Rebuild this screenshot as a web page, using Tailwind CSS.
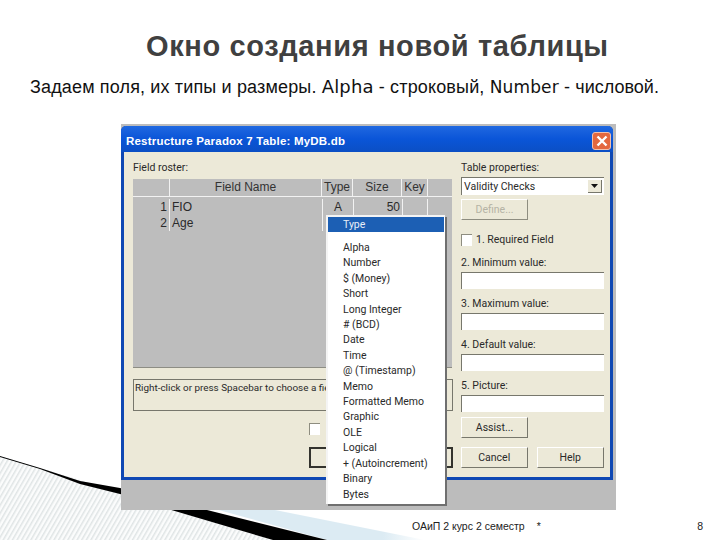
<!DOCTYPE html>
<html lang="en">
<head>
    <meta charset="UTF-8">
    <title>Окно создания новой таблицы</title>
    <script src="https://cdn.jsdelivr.net/npm/@tailwindcss/browser@4"></script>
</head>
<body class="bg-white">
<div class="relative w-[720px] h-[540px] overflow-hidden bg-white font-['Liberation_Sans',sans-serif]">

    <!-- slide decoration, bottom left -->
    <svg class="absolute left-0 top-0" width="720" height="540" viewBox="0 0 720 540">
        <defs>
            <pattern id="hatch" width="4" height="4" patternUnits="userSpaceOnUse" patternTransform="rotate(30)">
                <rect width="4" height="4" fill="#fbfcfc"/>
                <rect width="1.5" height="4" fill="#dfe4e5"/>
            </pattern>
            <linearGradient id="glow" x1="0" y1="0" x2="1" y2="0">
                <stop offset="0" stop-color="#dcebf3"/>
                <stop offset="0.8" stop-color="#dcebf3"/>
                <stop offset="1" stop-color="#ffffff"/>
            </linearGradient>
        </defs>
        <path d="M215 509 L270 509 L425 540 L327 540Z" fill="url(#glow)"/>
        <path d="M0 456 L120 492 L168 509 L273 540 L0 540Z" fill="url(#hatch)"/>
        <path d="M0 456 L40 468 L80 481 L120 488 L203 509 L327 540 L273 540 L168 509 L120 494 L80 484 L40 469 L0 457Z" fill="#000"/>
    </svg>

    <h1 class="relative pt-[30px] pl-[146px] text-[29px] leading-[32px] font-bold tracking-[0.63px] text-[#404040]">Окно создания новой таблицы</h1>
    <p class="relative mt-[14px] pl-[30px] text-[18px] leading-[22px] tracking-[0.15px] text-[#111] whitespace-nowrap">Задаем поля, их типы и размеры. <span class="font-['DejaVu_Sans',sans-serif]">Alpha</span> - строковый, <span class="font-['DejaVu_Sans',sans-serif] text-[17px]">Number</span> - <span class="tracking-normal">числовой.</span></p>

    <!-- screenshot of the Paradox dialog -->
    <div class="relative mt-[26px] ml-[121px] w-[495px] h-[386px] pt-[2px] bg-[#bcbcbc] font-['Roboto',sans-serif] text-[10.5px] leading-[12px] text-[#2a2a2a]">
        <div class="w-[492px] border-x-[3px] border-b-[3px] border-[#0f48b4] rounded-t-[5px] h-[354px] flex flex-col">
            <div class="h-[26px] -mx-[3px] shrink-0 rounded-t-[5px] bg-gradient-to-b from-[#1f68e0] via-[#0a55d8] to-[#0b4fc4] flex items-center justify-between pl-[5px] pr-[2px] pt-[3px]">
                <span class="font-['Liberation_Sans',sans-serif] text-[11.5px] font-bold tracking-[0.2px] text-white">Restructure Paradox 7 Table: MyDB.db</span>
                <span class="w-[19px] h-[18px] rounded-[3px] bg-[#e4683f] border border-[#f3c0ab] flex items-center justify-center">
                    <svg width="12" height="12" viewBox="0 0 12 12"><path d="M1.5 1.5 L10.5 10.5 M10.5 1.5 L1.5 10.5" stroke="#fff" stroke-width="2.4"/></svg>
                </span>
            </div>

            <div class="flex-1 bg-[#ece9d8] flex">
                <!-- left column -->
                <div class="w-[334px] shrink-0 pl-[9px] flex flex-col">
                    <div class="pt-[10px] h-[27px]">Field roster:</div>
                    <div class="w-[319px] h-[189px] bg-[#bdbdbd] border-b border-[#8d8d84] font-['Liberation_Sans',sans-serif] text-[12px]">
                        <div class="flex h-[18px] border-b border-[#f2f2f2] leading-[16px] text-center text-[#333]">
                            <span class="w-[37px] h-full border-r border-[#f2f2f2]"></span>
                            <span class="w-[152px] h-full border-r border-[#f2f2f2]">Field Name</span>
                            <span class="w-[31px] h-full border-r border-[#f2f2f2]">Type</span>
                            <span class="w-[49px] h-full border-r border-[#f2f2f2]">Size</span>
                            <span class="w-[26px] h-full border-r border-[#f2f2f2]">Key</span>
                        </div>
                        <div class="flex leading-[16px] h-[34px] pt-[2px]">
                            <div class="w-[37px] pr-[2px] text-right border-r border-[#f2f2f2]">1<br>2</div>
                            <div class="w-[152px] pl-[2px]">FIO<br>Age</div>
                            <div class="w-[31px] text-center border-l border-[#f2f2f2]">A</div>
                            <div class="w-[49px] pr-[2px] text-right border-l border-[#f2f2f2]">50</div>
                            <div class="w-[26px] border-x border-[#f2f2f2]"></div>
                        </div>
                    </div>
                    <div class="mt-[11px] w-[320px] h-[32px] border border-[#77776c] pl-[1px] pt-[2px] text-[9.9px] whitespace-nowrap overflow-hidden">Right-click or press Spacebar to choose a fie</div>
                    <div class="mt-[12px] ml-[176px] w-[11px] h-[12px] bg-white border-l border-t border-[#8e8d80]"></div>
                    <div class="mt-[12px] ml-[176px] w-[144px] h-[21px] border-2 border-[#33332e] bg-[#ece9d8]"></div>
                </div>

                <!-- right column -->
                <div class="w-[146px] pl-[3px] flex flex-col">
                    <div class="pt-[10px] h-[25px]">Table properties:</div>
                    <div class="w-[143px] h-[18px] bg-white border-l border-t border-[#77776c] flex items-center justify-between pl-[2px] pr-[2px]">
                        <span>Validity Checks</span>
                        <span class="w-[14px] h-[13px] bg-[#ece9d8] border-r border-b border-[#77776c] flex items-center justify-center">
                            <svg width="7" height="4" viewBox="0 0 7 4"><path d="M0 0H7L3.5 4Z" fill="#111"/></svg>
                        </span>
                    </div>
                    <button class="mt-[4px] w-[67px] h-[21px] border-t border-l border-white border-r border-b border-r-[#8e8d80] border-b-[#8e8d80] text-[#b5b3a5]">Define...</button>
                    <div class="mt-[14px] flex items-center gap-[4px] h-[12px]">
                        <span class="w-[11px] h-[12px] bg-white border-l border-t border-[#8e8d80]"></span>
                        <span>1. Required Field</span>
                    </div>
                    <div class="mt-[10px] h-[16px] pt-[1px]">2. Minimum value:</div>
                    <div class="w-[143px] h-[17px] bg-white border-l border-t border-[#77776c]"></div>
                    <div class="mt-[8px] h-[16px] pt-[1px]">3. Maximum value:</div>
                    <div class="w-[143px] h-[17px] bg-white border-l border-t border-[#77776c]"></div>
                    <div class="mt-[8px] h-[16px] pt-[1px]">4. Default value:</div>
                    <div class="w-[143px] h-[17px] bg-white border-l border-t border-[#77776c]"></div>
                    <div class="mt-[8px] h-[16px] pt-[1px]">5. Picture:</div>
                    <div class="w-[143px] h-[17px] bg-white border-l border-t border-[#77776c]"></div>
                    <button class="mt-[5px] w-[67px] h-[21px] border border-t-white border-l-white border-r-[#77776c] border-b-[#77776c]">Assist...</button>
                    <div class="mt-[9px] flex gap-[9px]">
                        <button class="w-[67px] h-[21px] border border-t-white border-l-white border-r-[#77776c] border-b-[#77776c]">Cancel</button>
                        <button class="w-[68px] h-[21px] border border-t-white border-l-white border-r-[#77776c] border-b-[#77776c]">Help</button>
                    </div>
                </div>
            </div>
        </div>

        <!-- context menu over the dialog -->
        <div class="absolute left-[205px] top-[91px] w-[119px] h-[289px] bg-white border-t-2 border-l-2 border-[#f4f4f4] shadow-[2px_2px_0_#6f6f6f] leading-[15.4px] text-[#2a2a2a]">
            <div class="h-[15px] bg-[#1c5fb4] text-[#e8eef8] pl-[15px] mr-[1px] leading-[15px]">Type</div>
            <ul class="pt-[8px] pl-[15px] whitespace-nowrap">
                <li>Alpha</li>
                <li>Number</li>
                <li>$ (Money)</li>
                <li>Short</li>
                <li>Long Integer</li>
                <li># (BCD)</li>
                <li>Date</li>
                <li>Time</li>
                <li>@ (Timestamp)</li>
                <li>Memo</li>
                <li>Formatted Memo</li>
                <li>Graphic</li>
                <li>OLE</li>
                <li>Logical</li>
                <li>+ (Autoincrement)</li>
                <li>Binary</li>
                <li>Bytes</li>
            </ul>
        </div>
    </div>

    <div class="relative mt-[10px] pl-[412px] pr-[17px] flex text-[10.5px] leading-[12px] text-[#222]">
        <span>ОАиП 2 курс 2 семестр</span>
        <span class="ml-[12px]">*</span>
        <span class="ml-auto">8</span>
    </div>
</div>
</body>
</html>
